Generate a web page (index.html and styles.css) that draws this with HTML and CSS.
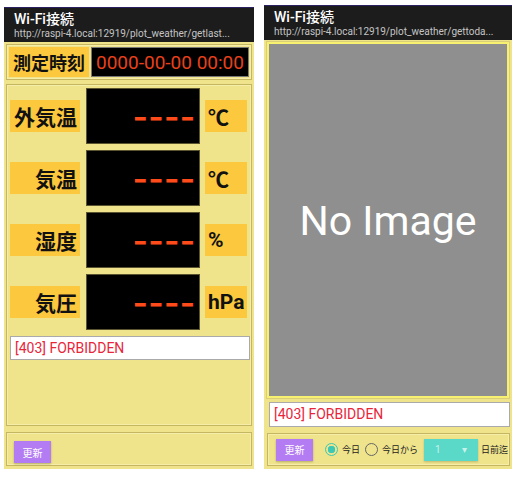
FILE: index.html
```html
<!DOCTYPE html>
<html lang="ja">
<head>
    <meta charset="UTF-8">
    <meta name="viewport" content="width=device-width, initial-scale=1.0">
    <title>Weather</title>
    <link rel="stylesheet" href="styles.css">
</head>
<body>
    <div id="screens">
        <div class="phone" id="phone-now">
            <div class="appbar">
                <div class="appbar-title">Wi-Fi接続</div>
                <div class="appbar-url">http://raspi-4.local:12919/plot_weather/getlast...</div>
            </div>
            <div class="content">
                <div class="box time-box">
                    <div class="label time-label">測定時刻</div>
                    <div class="time-value">0000-00-00 00:00</div>
                </div>
                <div class="box main-box">
                    <div class="row">
                        <div class="label">外気温</div>
                        <div class="value">––––</div>
                        <div class="unit">℃</div>
                    </div>
                    <div class="row">
                        <div class="label">気温</div>
                        <div class="value">––––</div>
                        <div class="unit">℃</div>
                    </div>
                    <div class="row">
                        <div class="label">湿度</div>
                        <div class="value">––––</div>
                        <div class="unit">%</div>
                    </div>
                    <div class="row">
                        <div class="label">気圧</div>
                        <div class="value">––––</div>
                        <div class="unit">hPa</div>
                    </div>
                    <div class="message">[403] FORBIDDEN</div>
                </div>
                <div class="box button-box">
                    <button class="update-button">更新</button>
                </div>
            </div>
        </div>

        <div class="phone" id="phone-plot">
            <div class="appbar">
                <div class="appbar-title">Wi-Fi接続</div>
                <div class="appbar-url">http://raspi-4.local:12919/plot_weather/gettoda...</div>
            </div>
            <div class="content">
                <div class="image-frame">
                    <div class="no-image">No Image</div>
                </div>
                <div class="message plot-message">[403] FORBIDDEN</div>
                <div class="box button-box plot-buttons">
                    <button class="update-button">更新</button>
                    <label class="radio"><span class="radio-dot checked"></span>今日</label>
                    <label class="radio"><span class="radio-dot"></span>今日から</label>
                    <div class="spinner"><span>1</span><span>▾</span></div>
                    <span class="days-label">日前迄</span>
                </div>
            </div>
        </div>
    </div>
</body>
</html>
```

FILE: styles.css
```css
body { margin: 0; background: #fff; font-family: Roboto, "Noto Sans CJK JP", sans-serif; }
#screens { display: flex; align-items: flex-start; gap: 10px; padding-left: 4px; }
.phone { display: flex; flex-direction: column; background: #efe48c; overflow: hidden; }
#phone-now { width: 250px; height: 462px; margin-top: 7px; }
#phone-plot { width: 248px; height: 464px; margin-top: 5px; }

.appbar { height: 35px; background: #1c1c1c; padding: 0 10px; box-sizing: border-box; border-top: 1px solid #2a2060; }
.appbar-title { color: #fff; font-size: 14px; font-weight: 500; margin-top: 2px; line-height: 18px; }
.appbar-url { color: #c4c4c4; font-size: 10px; line-height: 12px; white-space: nowrap; }

.content { flex: 1; display: flex; flex-direction: column; padding: 2px 2px 0; }
.box { border: 1px solid #c5b761; box-shadow: inset 0 0 0 1px #f6eea8; box-sizing: border-box; }

.time-box { display: flex; gap: 2px; padding: 2px; height: 36px; }
.label { background: #fcc83e; color: #111; font-weight: 700; font-size: 21px; display: flex; align-items: center; justify-content: flex-end; padding-right: 3px; }
.time-label { width: 80px; font-size: 18px; justify-content: center; padding: 0; }
.time-value { flex: 1; background: #000; color: #e8401c; font-size: 19px; display: flex; align-items: center; justify-content: center; border: 1px solid #777; white-space: nowrap; }

.main-box { margin-top: 4px; height: 342px; padding: 2px 2px 0 3px; display: flex; flex-direction: column; }
.row { display: flex; align-items: center; height: 56px; margin-top: 1px; margin-bottom: 5px; }
.row .label { width: 67px; height: 32px; }
.value { width: 114px; height: 56px; margin-left: 6px; background: #000; border: 1px solid #5a5430; box-sizing: border-box; color: #ff4a1a; font-size: 19px; font-weight: 900; letter-spacing: 4px; -webkit-text-stroke: 1px #ff4a1a; display: flex; align-items: center; justify-content: flex-end; padding: 5px 2px 0 0; }
.unit { width: 42px; height: 32px; margin-left: 5px; background: #fcc83e; color: #111; font-weight: 700; font-size: 21px; display: flex; align-items: center; padding-left: 3px; box-sizing: border-box; }
.message { background: #fff; border: 1px solid #aaa; color: #e8263a; font-size: 14px; height: 24px; line-height: 22px; padding-left: 4px; box-sizing: border-box; }
.main-box .message { margin-top: 1px; width: 240px; }

.button-box { margin-top: 6px; flex: 1; display: flex; align-items: flex-start; padding: 8px 0 0 7px; margin-bottom: 3px; }
.update-button { width: 37px; height: 22px; border: none; background: #b47cf2; color: #fff; font-size: 10px; font-family: "Noto Sans CJK JP", sans-serif; padding: 0; box-shadow: 0 1px 2px rgba(0,0,0,0.25); flex-shrink: 0; }

.image-frame { height: 352px; border: 2px solid #f8f070; box-shadow: 0 0 0 1px #d9cf78; background: #8f8f8f; display: flex; align-items: center; justify-content: center; margin: 0 1px; }
.no-image { color: #fff; font-size: 41px; margin-top: 2px; }
.plot-message { margin: 4px 0 0 3px; height: 25px; line-height: 23px; }
.plot-buttons { margin-top: 6px; margin-left: 1px; padding-left: 8px; align-items: center; padding-top: 0; gap: 0; }
.radio { display: flex; align-items: center; font-size: 9px; color: #222; margin-left: 12px; white-space: nowrap; flex-shrink: 0; }
.radio + .radio { margin-left: 5px; }
.radio-dot { width: 13px; height: 13px; border-radius: 50%; border: 1.5px solid #666; margin-right: 4px; box-sizing: border-box; }
.radio-dot.checked { border-color: #3cc8b4; background: radial-gradient(circle, #3cc8b4 0 3.5px, transparent 4px); }
.spinner { width: 54px; height: 22px; margin-left: 6px; background: #5ad8c8; color: #c8f2ec; font-size: 10px; display: flex; justify-content: space-around; align-items: center; box-shadow: 0 1px 2px rgba(0,0,0,0.2); flex-shrink: 0; }
.days-label { font-size: 9px; color: #222; margin-left: 3px; white-space: nowrap; }
```
